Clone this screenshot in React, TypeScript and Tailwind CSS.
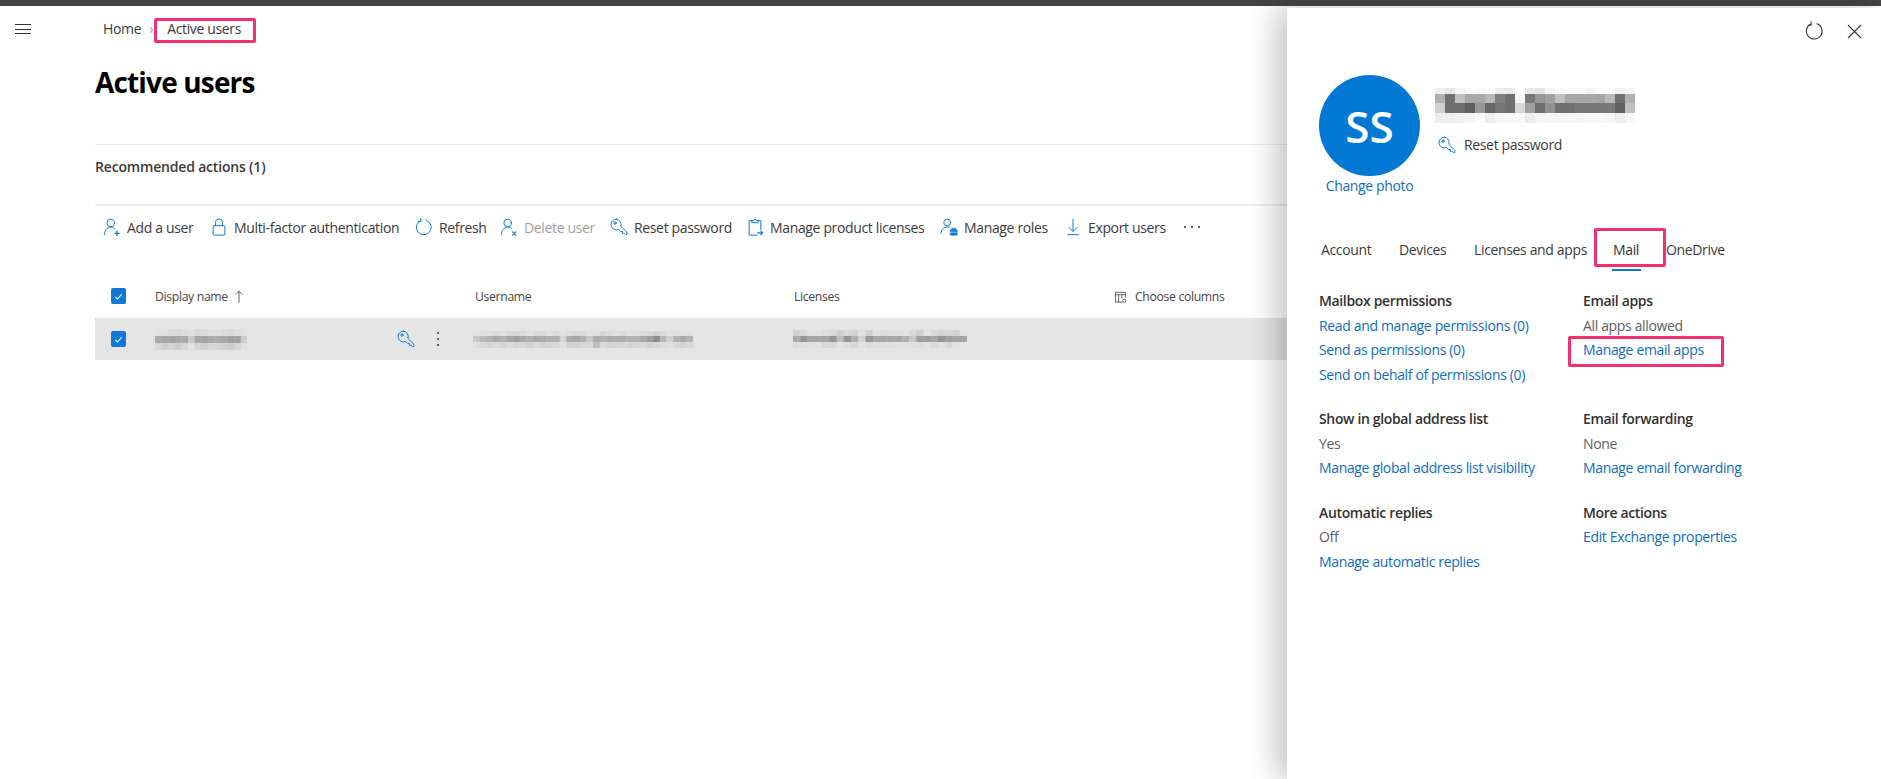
const stroke = {
  fill: 'none',
  stroke: 'currentColor',
  strokeWidth: 1.1,
  strokeLinecap: 'round' as const,
  strokeLinejoin: 'round' as const,
}

function KeyIcon({ className }: { className: string }) {
  return (
    <svg viewBox="0 0 20 20" className={className} {...stroke}>
      <path d="M7.2 1.2a6 6 0 1 0 2.3 11.5l2.3 2.3h2v2h2l1.2 1.4h1.8v-2.6l-6.7-6.6a6 6 0 0 0-4.9-8z" />
      <circle cx="5.6" cy="5.6" r="1.3" />
    </svg>
  )
}

function PersonIcon({ className, mark }: { className: string; mark: 'plus' | 'x' }) {
  return (
    <svg viewBox="0 0 20 20" className={className} {...stroke}>
      <circle cx="8.5" cy="5.5" r="4.2" />
      <path d="M1.5 18.5c0-4.6 3-8.3 7-8.3 1.8 0 3.2.6 4.4 1.7" />
      {mark === 'plus' ? (
        <path d="M15.5 14.5v5M13 17h5" strokeWidth="1.4" />
      ) : (
        <path d="M14 15.5l3.5 3.5M17.5 15.5L14 19" strokeWidth="1.3" />
      )}
    </svg>
  )
}

function LockIcon({ className }: { className: string }) {
  return (
    <svg viewBox="0 0 20 20" className={className} {...stroke}>
      <rect x="3.5" y="8.5" width="13" height="10.5" rx="1" />
      <path d="M6 8.5V5a4 4 0 0 1 8 0v3.5" />
    </svg>
  )
}

function RefreshIcon({ className }: { className: string }) {
  return (
    <svg viewBox="0 0 20 20" className={className} {...stroke}>
      <path d="M12.6 2.400a8.300 8.300 0 1 1-6.200.2" />
      <path d="M6.400 .4v3.500h-3" />
    </svg>
  )
}

function ClipboardIcon({ className }: { className: string }) {
  return (
    <svg viewBox="0 0 20 20" className={className} {...stroke}>
      <path d="M6.5 3H3.5v16h9M13.5 3h3v10" />
      <path d="M6.5 4.8V2.8h2a1.5 1.5 0 0 1 3 0h2v2z" />
      <path d="M13 16.5h5.5M16.5 14.5l2 2-2 2" strokeWidth="1.3" />
    </svg>
  )
}

function RolesIcon({ className }: { className: string }) {
  return (
    <svg viewBox="0 0 20 20" className={className} {...stroke}>
      <circle cx="8" cy="5" r="3.8" />
      <path d="M1 17c.4-4 3.200-7 7-7 .8 0 1.500.1 2.200.4" />
      <rect x="11.500" y="13" width="7.500" height="6" rx="1" fill="currentColor" />
      <path d="M13.500 13v-1.500h3.500V13" />
      <path d="M11.500 15.800h7.500" stroke="#fff" strokeWidth="0.7" />
    </svg>
  )
}

function DownloadIcon({ className }: { className: string }) {
  return (
    <svg viewBox="0 0 20 20" className={className} {...stroke}>
      <path d="M10 1.500v13M5.500 10.500L10 15l4.500-4.500M4 18.500h12" />
    </svg>
  )
}

function ColumnsIcon({ className }: { className: string }) {
  return (
    <svg viewBox="0 0 14 14" className={className} fill="none" stroke="currentColor" strokeWidth="0.9">
      <path d="M9 12H1.500V1.500h11V7M1.500 4h11M5 4v8M8.500 4v4" />
      <circle cx="11" cy="10.500" r="1.700" />
    </svg>
  )
}

function Check() {
  return (
    <span className="flex h-[16px] w-[15px] items-center justify-center rounded-[2px] bg-[#0f78d4]">
      <svg viewBox="0 0 10 10" className="h-[9px] w-[9px]" fill="none" stroke="#fff" strokeWidth="1.200">
        <path d="M1.500 5.500l2.300 2.300 4.800-5.300" />
      </svg>
    </span>
  )
}

// pixelated (redacted) text, every number is the grey level of one cell
function Mosaic({ rows, cell, heights, className }: { rows: number[][]; cell: number; heights: number[]; className: string }) {
  const width = rows[0].length * cell
  const height = heights.reduce((a, b) => a + b, 0)
  let y = 0
  return (
    <svg viewBox={`0 0 ${width} ${height}`} width={width} height={height} className={className}>
      {rows.map((row, r) => {
        const top = y
        y += heights[r]
        return row.map((v, c) => (
          <rect key={`${r}-${c}`} x={c * cell} y={top} width={cell + 0.3} height={heights[r] + 0.3} fill={`rgb(${v},${v},${v})`} />
        ))
      })}
    </svg>
  )
}

const panelName = [
  [238, 232, 245, 250, 248, 250, 236, 236, 255, 232, 228, 245, 250, 250, 250, 245, 250, 250, 240, 245],
  [176, 112, 192, 168, 168, 184, 128, 112, 245, 120, 152, 160, 192, 168, 168, 168, 165, 184, 112, 176],
  [208, 112, 112, 96, 152, 104, 117, 112, 216, 160, 112, 144, 112, 112, 120, 120, 120, 120, 96, 192],
  [238, 238, 242, 245, 250, 238, 245, 248, 250, 236, 245, 245, 245, 245, 245, 248, 248, 245, 236, 248],
]

const tableName = [
  [226, 224, 218, 218, 222, 226, 216, 220, 222, 224, 220, 218, 222, 226],
  [172, 168, 166, 168, 170, 200, 168, 166, 170, 172, 168, 160, 162, 205],
  [216, 208, 212, 206, 214, 224, 210, 208, 214, 212, 208, 206, 214, 226],
]

const tableUser = [
  [226, 224, 222, 218, 222, 216, 214, 220, 224, 216, 218, 224, 220, 226, 220, 216, 218, 224, 226, 214, 220, 224, 218, 226, 222, 220, 216, 210, 218, 224, 222, 226, 224],
  [200, 186, 180, 172, 178, 168, 160, 172, 178, 170, 172, 178, 176, 210, 172, 168, 178, 200, 172, 176, 172, 174, 172, 176, 178, 170, 160, 140, 182, 210, 178, 172, 180],
  [222, 216, 212, 218, 214, 220, 214, 216, 210, 218, 212, 214, 216, 224, 208, 210, 214, 216, 190, 218, 212, 214, 216, 212, 214, 218, 212, 216, 220, 224, 216, 212, 216],
]

const tableLicense = [
  [210, 216, 226, 226, 222, 218, 208, 216, 212, 226, 208, 224, 222, 226, 224, 226, 218, 208, 226, 216, 212, 214, 210, 226],
  [170, 150, 164, 166, 166, 150, 190, 150, 176, 210, 150, 168, 168, 168, 168, 180, 200, 158, 156, 164, 150, 160, 166, 166],
  [222, 222, 226, 226, 216, 214, 226, 222, 214, 226, 220, 222, 224, 222, 226, 226, 224, 222, 226, 218, 224, 216, 226, 228],
]

const actions = [
  { label: 'Add a user', width: 'w-[107px]', icon: <PersonIcon mark="plus" className="h-[18px] w-[18px] text-[#0f78d4]" /> },
  { label: 'Multi-factor authentication', width: 'w-[205px]', icon: <LockIcon className="h-[18px] w-[18px] text-[#0f78d4]" /> },
  { label: 'Refresh', width: 'w-[85px]', icon: <RefreshIcon className="h-[18px] w-[18px] text-[#0f78d4]" /> },
  { label: 'Delete user', width: 'w-[110px]', muted: true, icon: <PersonIcon mark="x" className="h-[18px] w-[18px] text-[#0f78d4]" /> },
  { label: 'Reset password', width: 'w-[136px]', icon: <KeyIcon className="h-[18px] w-[18px] text-[#0f78d4]" /> },
  { label: 'Manage product licenses', width: 'w-[194px]', icon: <ClipboardIcon className="h-[18px] w-[18px] text-[#0f78d4]" /> },
  { label: 'Manage roles', width: 'w-[124px]', icon: <RolesIcon className="h-[18px] w-[18px] text-[#0f78d4]" /> },
  { label: 'Export users', width: 'w-[119px]', icon: <DownloadIcon className="h-[18px] w-[18px] text-[#0f78d4]" /> },
]

const Link = ({ children }: { children: React.ReactNode }) => <div className="text-[#0f6cbd]">{children}</div>
const Title = ({ children }: { children: React.ReactNode }) => <div className="font-semibold text-[#323130]">{children}</div>
const Value = ({ children }: { children: React.ReactNode }) => <div className="text-[#605e5c]">{children}</div>

export default function App() {
  return (
    <div className="flex h-screen flex-col overflow-hidden bg-white font-['Open_Sans',sans-serif] text-[14px] tracking-[-0.025em] text-[#3b3a39]">
      <div className="h-[6px] bg-[#464442]" />
      <div className="flex min-h-0 flex-1">
        <div className="w-[95px] shrink-0 pl-[15px] pt-[18px]">
          <div className="flex h-[10px] w-[16px] flex-col justify-between">
            <div className="h-px bg-[#323130]" />
            <div className="h-px bg-[#323130]" />
            <div className="h-px bg-[#323130]" />
          </div>
        </div>

        <main className="min-w-0 flex-1">
          <div className="mt-[13px] flex h-[20px] items-center pl-[8px] leading-5">
            <span>Home</span>
            <span className="w-[26px] pl-[8px] text-[#a19f9d]">›</span>
            <span className="relative">
              Active users
              <span className="absolute -bottom-[4px] -left-[13px] -right-[15px] -top-[1px] rounded-[2px] border-[3px] border-[#f2326e]" />
            </span>
          </div>
          <h1 className="mt-[24px] text-[28px] font-bold leading-[38px] tracking-[-0.03em] text-black">Active users</h1>
          <div className="mt-[43px] h-[60px] border-t border-[#e8e8e8] pt-[12px] font-semibold leading-5 tracking-[-0.013em]">Recommended actions (1)</div>
          <div className="flex h-[44px] items-center border-t-2 border-[#edebe9] pl-[8px]">
            {actions.map((a) => (
              <div key={a.label} className={`flex shrink-0 items-center gap-[6px] ${a.width} ${a.muted ? 'text-[#a19f9d]' : ''}`}>
                {a.icon}
                <span>{a.label}</span>
              </div>
            ))}
            <div className="ml-[1px] flex w-[16px] justify-between">
              <span className="h-[2px] w-[2px] rounded-full bg-[#323130]" />
              <span className="h-[2px] w-[2px] rounded-full bg-[#323130]" />
              <span className="h-[2px] w-[2px] rounded-full bg-[#323130]" />
            </div>
          </div>

          <div className="mt-[28px] flex h-[42px] items-center pl-[16px] text-[12.25px] text-[#484644]">
            <div className="-mt-[2px] w-[44px]"><Check /></div>
            <div className="flex w-[320px] items-center gap-[6px]">
              Display name
              <svg viewBox="0 0 12 16" className="h-[14px] w-[10px]" fill="none" stroke="currentColor" strokeWidth="1">
                <path d="M6 15V1M2 5l4-4 4 4" />
              </svg>
            </div>
            <div className="w-[319px]">Username</div>
            <div className="w-[320px]">Licenses</div>
            <div className="flex items-center gap-[8px]">
              <ColumnsIcon className="h-[13px] w-[13px]" />
              Choose columns
            </div>
          </div>

          <div className="flex h-[42px] items-center bg-[#e5e5e5] pl-[16px]">
            <div className="w-[44px]"><Check /></div>
            <div className="flex w-[318px] items-center">
              <Mosaic rows={tableName} cell={6.600} heights={[7, 7, 7]} className="blur-[0.6px]" />
              <KeyIcon className="ml-[150px] h-[18px] w-[18px] text-[#0f78d4]" />
              <div className="ml-[22px] flex h-[14px] flex-col justify-between">
                <span className="h-[2px] w-[2px] rounded-full bg-[#323130]" />
                <span className="h-[2px] w-[2px] rounded-full bg-[#323130]" />
                <span className="h-[2px] w-[2px] rounded-full bg-[#323130]" />
              </div>
            </div>
            <div className="w-[320px]">
              <Mosaic rows={tableUser} cell={6.670} heights={[5, 6, 6]} className="blur-[0.6px]" />
            </div>
            <Mosaic rows={tableLicense} cell={7.250} heights={[6, 6, 6]} className="blur-[0.6px]" />
          </div>
        </main>

        <aside className="mt-[2px] w-[594px] shrink-0 bg-white shadow-[-10px_0_28px_rgba(0,0,0,0.24)]">
          <div className="flex items-center justify-end gap-[23px] pr-[19px] pt-[13px]">
            <RefreshIcon className="h-[20px] w-[19px]" />
            <svg viewBox="0 0 15 15" className="h-[15px] w-[15px]" fill="none" stroke="currentColor" strokeWidth="1.100">
              <path d="M1 1l13 13M14 1L1 14" />
            </svg>
          </div>

          <div className="ml-[32px] mt-[34px] flex">
            <div className="flex w-[101px] flex-col items-center">
              <div className="flex h-[101px] w-[101px] items-center justify-center rounded-full bg-[#0078d4] text-[44px] font-semibold leading-none tracking-normal text-white">SS</div>
              <div className="whitespace-nowrap leading-[20px] text-[#0f6cbd]">Change photo</div>
            </div>
            <div className="ml-[18px]">
              <Mosaic rows={panelName} cell={10} heights={[6, 9, 10, 10]} className="-ml-[3px] mt-[13px] blur-[0.5px]" />
              <div className="mt-[12px] flex items-center gap-[8px] font-medium leading-5">
                <KeyIcon className="h-[18px] w-[18px] text-[#0f78d4]" />
                Reset password
              </div>
            </div>
          </div>

          <div className="ml-[34px] mt-[42px] flex h-[24px] items-center leading-[24px]">
            <div className="w-[78px]">Account</div>
            <div className="w-[75px]">Devices</div>
            <div className="w-[139px]">Licenses and apps</div>
            <div className="relative w-[53px] font-medium text-[#323130]">
              Mail
              <span className="absolute -bottom-[5px] -left-[19px] -top-[10px] w-[72px] rounded-[2px] border-[3px] border-[#f2326e]" />
              <span className="absolute -bottom-[9px] left-[-1px] h-[2px] w-[29px] bg-[#0f78d4]" />
            </div>
            <div>OneDrive</div>
          </div>

          <div className="ml-[32px] mt-[27px] grid grid-cols-[264px_1fr] gap-y-[20px] leading-[24.500px]">
            <div>
              <Title>Mailbox permissions</Title>
              <Link>Read and manage permissions (0)</Link>
              <Link>Send as permissions (0)</Link>
              <Link>Send on behalf of permissions (0)</Link>
            </div>
            <div>
              <Title>Email apps</Title>
              <Value>All apps allowed</Value>
              <div className="relative text-[#0f6cbd]">
                Manage email apps
                <span className="absolute -left-[15px] top-[-2px] h-[31px] w-[156px] rounded-[2px] border-[3px] border-[#f2326e]" />
              </div>
            </div>
            <div>
              <Title>Show in global address list</Title>
              <Value>Yes</Value>
              <Link>Manage global address list visibility</Link>
            </div>
            <div>
              <Title>Email forwarding</Title>
              <Value>None</Value>
              <Link>Manage email forwarding</Link>
            </div>
            <div>
              <Title>Automatic replies</Title>
              <Value>Off</Value>
              <Link>Manage automatic replies</Link>
            </div>
            <div>
              <Title>More actions</Title>
              <Link>Edit Exchange properties</Link>
            </div>
          </div>
        </aside>
      </div>
    </div>
  )
}
